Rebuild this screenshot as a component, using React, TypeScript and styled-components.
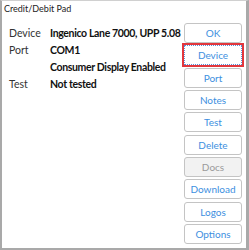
import React from "react";
import styled, { createGlobalStyle } from "styled-components";

const GlobalStyle = createGlobalStyle`
  html, body {
    margin: 0;
    padding: 0;
    background: #ffffff;
  }
  body {
    font-family: Lato, "Noto Sans", sans-serif;
  }
`;

const rows = [
  { label: "Device", value: "Ingenico Lane 7000, UPP 5.08" },
  { label: "Port", value: "COM1" },
  { label: "", value: "Consumer Display Enabled" },
  { label: "Test", value: "Not tested" },
];

const buttons = [
  "OK",
  "Device",
  "Port",
  "Notes",
  "Test",
  "Delete",
  "Docs",
  "Download",
  "Logos",
  "Options",
];

export default function App() {
  return (
    <>
      <GlobalStyle />
      <Frame>
        <Title>Credit/Debit Pad</Title>
        <Body>
          <Info>
            {rows.map((r, i) => (
              <React.Fragment key={i}>
                <Label>{r.label}</Label>
                <Value>{r.value}</Value>
              </React.Fragment>
            ))}
          </Info>
          <ButtonColumn>
            {buttons.map((b) => (
              <ActionButton
                key={b}
                disabled={b === "Docs"}
                $focused={b === "Device"}
              >
                {b}
              </ActionButton>
            ))}
          </ButtonColumn>
        </Body>
      </Frame>
    </>
  );
}

const Frame = styled.div`
  width: 249px;
  height: 250px;
  box-sizing: border-box;
  border-top: 1px solid #d0d0d0;
  border-left: 2px solid #a9a9a9;
  border-right: 3px solid #a9a9a9;
  border-bottom: 2px solid #a9a9a9;
  display: flex;
  flex-direction: column;
  background: #ffffff;
`;

const Title = styled.div`
  height: 17px;
  padding-left: 2px;
  font-size: 9px;
  line-height: 15px;
  color: #222222;
`;

const Body = styled.div`
  display: flex;
  justify-content: space-between;
  padding: 5px 4px 0 7px;
`;

const Info = styled.div`
  display: grid;
  grid-template-columns: 41px auto;
  grid-auto-rows: 17px;
  align-items: center;
  padding-top: 1px;
  align-self: flex-start;
  min-width: 0;
`;

const Label = styled.div`
  font-size: 10.5px;
  color: #333333;
`;

const Value = styled.div`
  font-size: 10.5px;
  font-weight: 700;
  color: #111111;
  white-space: nowrap;
  letter-spacing: -0.35px;
`;

const ButtonColumn = styled.div`
  display: flex;
  flex-direction: column;
  flex-shrink: 0;
  gap: 2.33px;
`;

const ActionButton = styled.button<{ $focused?: boolean }>`
  width: 58px;
  height: 20px;
  box-sizing: border-box;
  padding: 0;
  border: 1px solid #c4c4c4;
  border-radius: 3px;
  background: #ffffff;
  color: #3d8fe0;
  font-family: Lato, "Noto Sans", sans-serif;
  font-size: 10px;
  line-height: 18px;
  text-align: center;

  &:disabled {
    background: #f2f2f2;
    color: #9a9a9a;
  }

  ${(p) =>
    p.$focused &&
    `
    border: 1px dotted #5b8fd6;
    border-radius: 0;
    outline: 2px solid #e2363c;
    outline-offset: 0;
  `}
`;
